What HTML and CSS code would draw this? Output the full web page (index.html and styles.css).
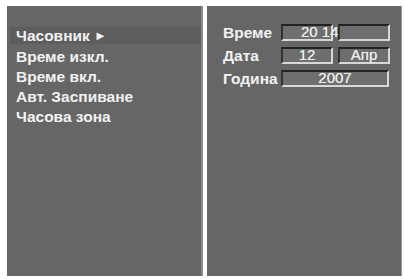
FILE: index.html
```html
<!DOCTYPE html>
<html lang="bg">
<head>
  <meta charset="UTF-8" />
  <title>Часовник</title>
  <link rel="stylesheet" href="styles.css">
</head>
<body>
  <div class="screen">
    <nav class="menu">
      <div class="menu-item active">Часовник <span class="arrow">&#9658;</span></div>
      <div class="menu-item">Време изкл.</div>
      <div class="menu-item">Време вкл.</div>
      <div class="menu-item">Авт. Заспиване</div>
      <div class="menu-item">Часова зона</div>
    </nav>

    <section class="settings">
      <div class="row">
        <span class="label">Време</span>
        <span class="field time">20 14</span>
        <span class="field"></span>
      </div>
      <div class="row">
        <span class="label">Дата</span>
        <span class="field">12</span>
        <span class="field">Апр</span>
      </div>
      <div class="row">
        <span class="label">Година</span>
        <span class="field wide">2007</span>
      </div>
    </section>
  </div>
</body>
</html>
```

FILE: styles.css
```css
* {
  margin: 0;
  padding: 0;
  box-sizing: border-box;
}

html, body {
  width: 404px;
  height: 279px;
  background: #ffffff;
  font-family: 'Liberation Sans', Arial, sans-serif;
  overflow: hidden;
}

.screen {
  display: flex;
  gap: 4px;
  padding: 6px 2px 3px 7px;
  height: 279px;
}

.menu {
  width: 196px;
  background: #666666;
  border-right: 2px solid #8a8a8a;
  padding-top: 21px;
}

.menu-item {
  color: #f2f2f2;
  font-size: 15.5px;
  font-weight: bold;
  height: 20px;
  line-height: 20px;
  padding-left: 9px;
  white-space: nowrap;
}

.menu-item.active {
  background: #5d5d5d;
  height: 17px;
  line-height: 17px;
  margin-left: 3px;
  padding-left: 6px;
  margin-bottom: 3px;
}

.arrow {
  font-size: 13px;
  vertical-align: 1px;
}

.settings {
  flex: 1;
  background: #666666;
  border-right: 1px solid #9a9a9a;
  padding: 18px 0 0 16px;
  display: flex;
  flex-direction: column;
  gap: 6px;
}

.row {
  display: flex;
  align-items: center;
  height: 17px;
}

.label {
  width: 58px;
  color: #f2f2f2;
  font-size: 15.5px;
  font-weight: bold;
  white-space: nowrap;
}

.field {
  width: 52px;
  height: 17px;
  margin-right: 5px;
  border-top: 2px solid #222222;
  border-left: 2px solid #333333;
  border-bottom: 2px solid #d8d8d8;
  border-right: 2px solid #d8d8d8;
  background: #6e6e6e;
  color: #ebebeb;
  font-size: 15px;
  line-height: 12px;
  text-align: center;
  text-shadow: 0 0 0.4px #ebebeb;
}

.field.time {
  text-align: left;
  padding-left: 18px;
  white-space: nowrap;
}

.field.wide {
  width: 108px;
}
```
